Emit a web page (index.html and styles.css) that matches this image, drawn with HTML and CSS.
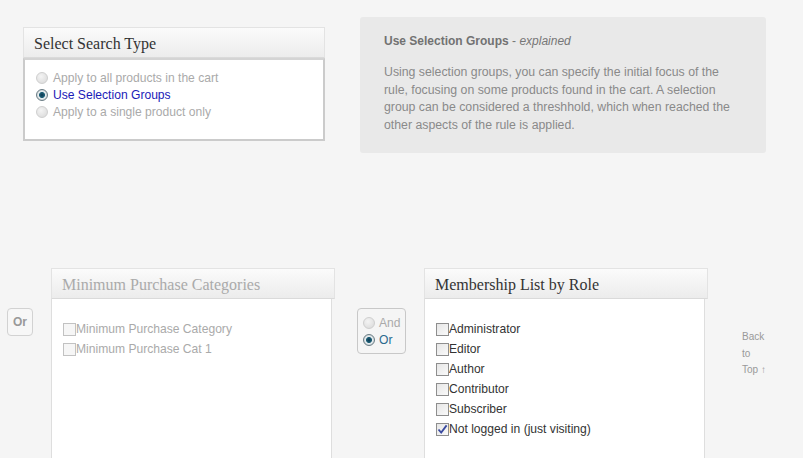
FILE: index.html
```html
<!DOCTYPE html>
<html>
<head>
<meta charset="utf-8">
<link rel="stylesheet" href="styles.css">
</head>
<body>
<div class="top-row">
  <div class="panel panel-search">
    <div class="panel-head">Select Search Type</div>
    <div class="panel-body search-body">
      <div class="radio-row muted"><span class="radio"></span>Apply to all products in the cart</div>
      <div class="radio-row selected"><span class="radio on"></span>Use Selection Groups</div>
      <div class="radio-row muted"><span class="radio"></span>Apply to a single product only</div>
    </div>
  </div>
  <div class="info">
    <div class="info-title"><b>Use Selection Groups</b> - <i>explained</i></div>
    <p class="info-text">Using selection groups, you can specify the initial focus of the rule, focusing on some products found in the cart. A selection group can be considered a threshhold, which when reached the other aspects of the rule is applied.</p>
  </div>
</div>

<div class="bottom-row">
  <div class="or-btn">Or</div>
  <div class="panel panel-low">
    <div class="panel-head muted-head">Minimum Purchase Categories</div>
    <div class="panel-body low-body">
      <div class="check-row muted"><span class="check"></span>Minimum Purchase Category</div>
      <div class="check-row muted"><span class="check"></span>Minimum Purchase Cat 1</div>
    </div>
  </div>
  <div class="andor">
    <div class="radio-row muted"><span class="radio"></span>And</div>
    <div class="radio-row or-sel"><span class="radio on"></span>Or</div>
  </div>
  <div class="panel panel-low">
    <div class="panel-head">Membership List by Role</div>
    <div class="panel-body low-body">
      <div class="check-row"><span class="check"></span>Administrator</div>
      <div class="check-row"><span class="check"></span>Editor</div>
      <div class="check-row"><span class="check"></span>Author</div>
      <div class="check-row"><span class="check"></span>Contributor</div>
      <div class="check-row"><span class="check"></span>Subscriber</div>
      <div class="check-row"><span class="check checked"><svg width="11" height="11" viewBox="0 0 11 11"><path d="M1.5 5.5 L4.2 8.6 L9.6 1.4" fill="none" stroke="#3a4aa0" stroke-width="1.8"/></svg></span>Not logged in (just visiting)</div>
    </div>
  </div>
  <div class="back-top">Back<br>to<br>Top ↑</div>
</div>
</body>
</html>
```

FILE: styles.css
```css
html, body {
  margin: 0;
  padding: 0;
  background: #f5f5f5;
  font-family: "Liberation Sans", Arial, sans-serif;
  font-size: 12px;
  overflow: hidden;
  height: 458px;
}

.top-row {
  display: flex;
  align-items: flex-start;
  padding-top: 17px;
  padding-left: 23px;
}

.panel-search {
  width: 302px;
  margin-top: 10px;
}

.panel-head {
  border: 1px solid #e3e3e3;
  border-bottom-color: #dadada;
  background: linear-gradient(#fbfbfb, #ececec);
  font-family: "Liberation Serif", Georgia, serif;
  font-size: 16px;
  color: #333;
  line-height: 31px;
  padding-left: 10px;
  box-sizing: border-box;
  height: 31px;
}

.muted-head {
  color: #aaa;
}

.panel-body {
  background: #fff;
  box-sizing: border-box;
}

.search-body {
  height: 83px;
  border: 2px solid #cbcbcb;
  border-top-color: #d4d4d4;
  padding-top: 9px;
  padding-left: 11px;
}

.radio-row {
  display: flex;
  align-items: center;
  height: 17px;
  color: #aaa;
  font-size: 12.1px;
}

.radio-row.selected {
  color: #1a1ab8;
}

.radio {
  width: 12px;
  height: 12px;
  border-radius: 50%;
  box-sizing: border-box;
  border: 1px solid #cfcfcf;
  background: radial-gradient(circle at 40% 35%, #f4f4f4, #d8d8d8);
  margin-right: 5px;
  flex: none;
  position: relative;
}

.radio.on {
  border-color: #6a7c84;
  background: radial-gradient(circle at 50% 50%, #0c3850 0, #1f6078 2.6px, #e8eef0 3.4px, #c8d0d4 5.5px);
}

.info {
  margin-left: 35px;
  width: 406px;
  height: 136px;
  background: #e9e9e9;
  border-radius: 3px;
  box-sizing: border-box;
  padding: 17px 30px 0 24px;
  color: #888;
}

.info-title {
  color: #777;
  line-height: 14px;
}

.info-title b {
  color: #727272;
}

.info-text {
  margin: 16px 0 0 0;
  line-height: 17.5px;
  font-size: 12.3px;
  color: #8a8a8a;
}

.bottom-row {
  display: flex;
  align-items: flex-start;
  margin-top: 115px;
  padding-left: 7px;
}

.or-btn {
  margin-top: 40px;
  width: 26px;
  height: 28px;
  box-sizing: border-box;
  border: 1px solid #d2d2d2;
  border-radius: 4px;
  color: #999;
  font-weight: bold;
  font-size: 12px;
  line-height: 26px;
  text-align: center;
  background: #f7f7f7;
}

.panel-low {
  width: 284px;
  margin-left: 18px;
}

.low-body {
  width: 281px;
  height: 170px;
  border: 1px solid #dedede;
  border-top: none;
  padding-top: 20px;
  padding-left: 11px;
}

.check-row {
  display: flex;
  align-items: center;
  height: 20px;
  color: #333;
  font-size: 12.1px;
}

.check-row.muted {
  color: #aaa;
}

.check {
  width: 13px;
  height: 13px;
  box-sizing: border-box;
  border: 1px solid #8e8e8e;
  background: linear-gradient(135deg, #e6e6e6, #fafafa);
  flex: none;
  display: flex;
  align-items: center;
  justify-content: center;
}

.check-row.muted .check {
  border-color: #c2c2c2;
  background: #f6f6f6;
}

.andor {
  margin-top: 40px;
  margin-left: 22px;
  margin-right: 18px;
  width: 49px;
  height: 46px;
  box-sizing: border-box;
  border: 1px solid #c8c8c8;
  border-radius: 4px;
  padding-top: 5px;
  padding-left: 5px;
}

.andor .radio {
  margin-right: 4px;
}

.andor .radio-row {
  height: 17px;
}

.radio-row.or-sel {
  color: #2a6a8e;
}

.andor + .panel-low {
  margin-left: 0;
}

.back-top {
  margin-left: 34px;
  margin-top: 61px;
  font-size: 10px;
  line-height: 16.5px;
  color: #999;
}
```
